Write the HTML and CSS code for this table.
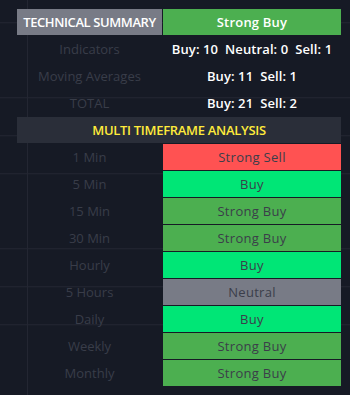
FILE: index.html
```html
<!DOCTYPE html>
<html>
<head>
<meta charset="utf-8">
<link rel="stylesheet" href="styles.css">
</head>
<body>
<div class="chart">
  <div class="table">
    <div class="cell head-left">TECHNICAL SUMMARY</div>
    <div class="cell head-right">Strong Buy</div>

    <div class="cell label">Indicators</div>
    <div class="cell value">Buy: 10&nbsp; Neutral: 0&nbsp; Sell: 1</div>
    <div class="cell label">Moving Averages</div>
    <div class="cell value">Buy: 11&nbsp; Sell: 1</div>
    <div class="cell label">TOTAL</div>
    <div class="cell value">Buy: 21&nbsp; Sell: 2</div>

    <div class="cell section">MULTI TIMEFRAME ANALYSIS</div>

    <div class="cell label">1 Min</div>
    <div class="cell signal strong-sell">Strong Sell</div>
    <div class="cell label">5 Min</div>
    <div class="cell signal buy">Buy</div>
    <div class="cell label">15 Min</div>
    <div class="cell signal strong-buy">Strong Buy</div>
    <div class="cell label">30 Min</div>
    <div class="cell signal strong-buy">Strong Buy</div>
    <div class="cell label">Hourly</div>
    <div class="cell signal buy">Buy</div>
    <div class="cell label">5 Hours</div>
    <div class="cell signal neutral">Neutral</div>
    <div class="cell label">Daily</div>
    <div class="cell signal buy">Buy</div>
    <div class="cell label">Weekly</div>
    <div class="cell signal strong-buy">Strong Buy</div>
    <div class="cell label">Monthly</div>
    <div class="cell signal strong-buy">Strong Buy</div>
  </div>
</div>
</body>
</html>
```

FILE: styles.css
```css
html, body {
  margin: 0;
  padding: 0;
}

body {
  width: 350px;
  height: 395px;
  overflow: hidden;
  background-color: #161a25;
  font-family: "Open Sans", "Lato", sans-serif;
}

.chart {
  width: 350px;
  height: 395px;
  box-sizing: border-box;
  padding: 9px 0 0 17px;
  background-image:
    linear-gradient(to right, transparent 27px, #232632 27px, #232632 28px, transparent 28px),
    repeating-linear-gradient(to bottom, transparent 0, transparent 36.75px, #232632 36.75px, #232632 37.75px);
  background-position: 0 0, 0 -14.75px;
  background-repeat: no-repeat, repeat;
}

.table {
  display: grid;
  grid-template-columns: 145px 178px;
  grid-auto-rows: 26px;
  gap: 1px;
  width: 324px;
}

.cell {
  display: flex;
  align-items: center;
  justify-content: center;
  font-size: 13px;
  white-space: nowrap;
}

.head-left {
  background: #787b86;
  color: #ffffff;
  font-weight: 600;
  letter-spacing: -0.4px;
}

.head-right {
  background: #4caf50;
  color: #ffffff;
  font-weight: 600;
  letter-spacing: 0.2px;
}

.label {
  color: #393d49;
}

.value {
  color: #ffffff;
  font-weight: 600;
  letter-spacing: 0.1px;
}

.section {
  grid-column: 1 / span 2;
  background: #2a2e39;
  color: #ffeb3b;
  font-weight: 600;
  letter-spacing: -0.3px;
}

.signal {
  color: #3b3e4a;
  letter-spacing: 0.3px;
}

.strong-sell {
  background: #ff5252;
}

.buy {
  background: #00e676;
}

.strong-buy {
  background: #4caf50;
}

.neutral {
  background: #787b86;
}
```
